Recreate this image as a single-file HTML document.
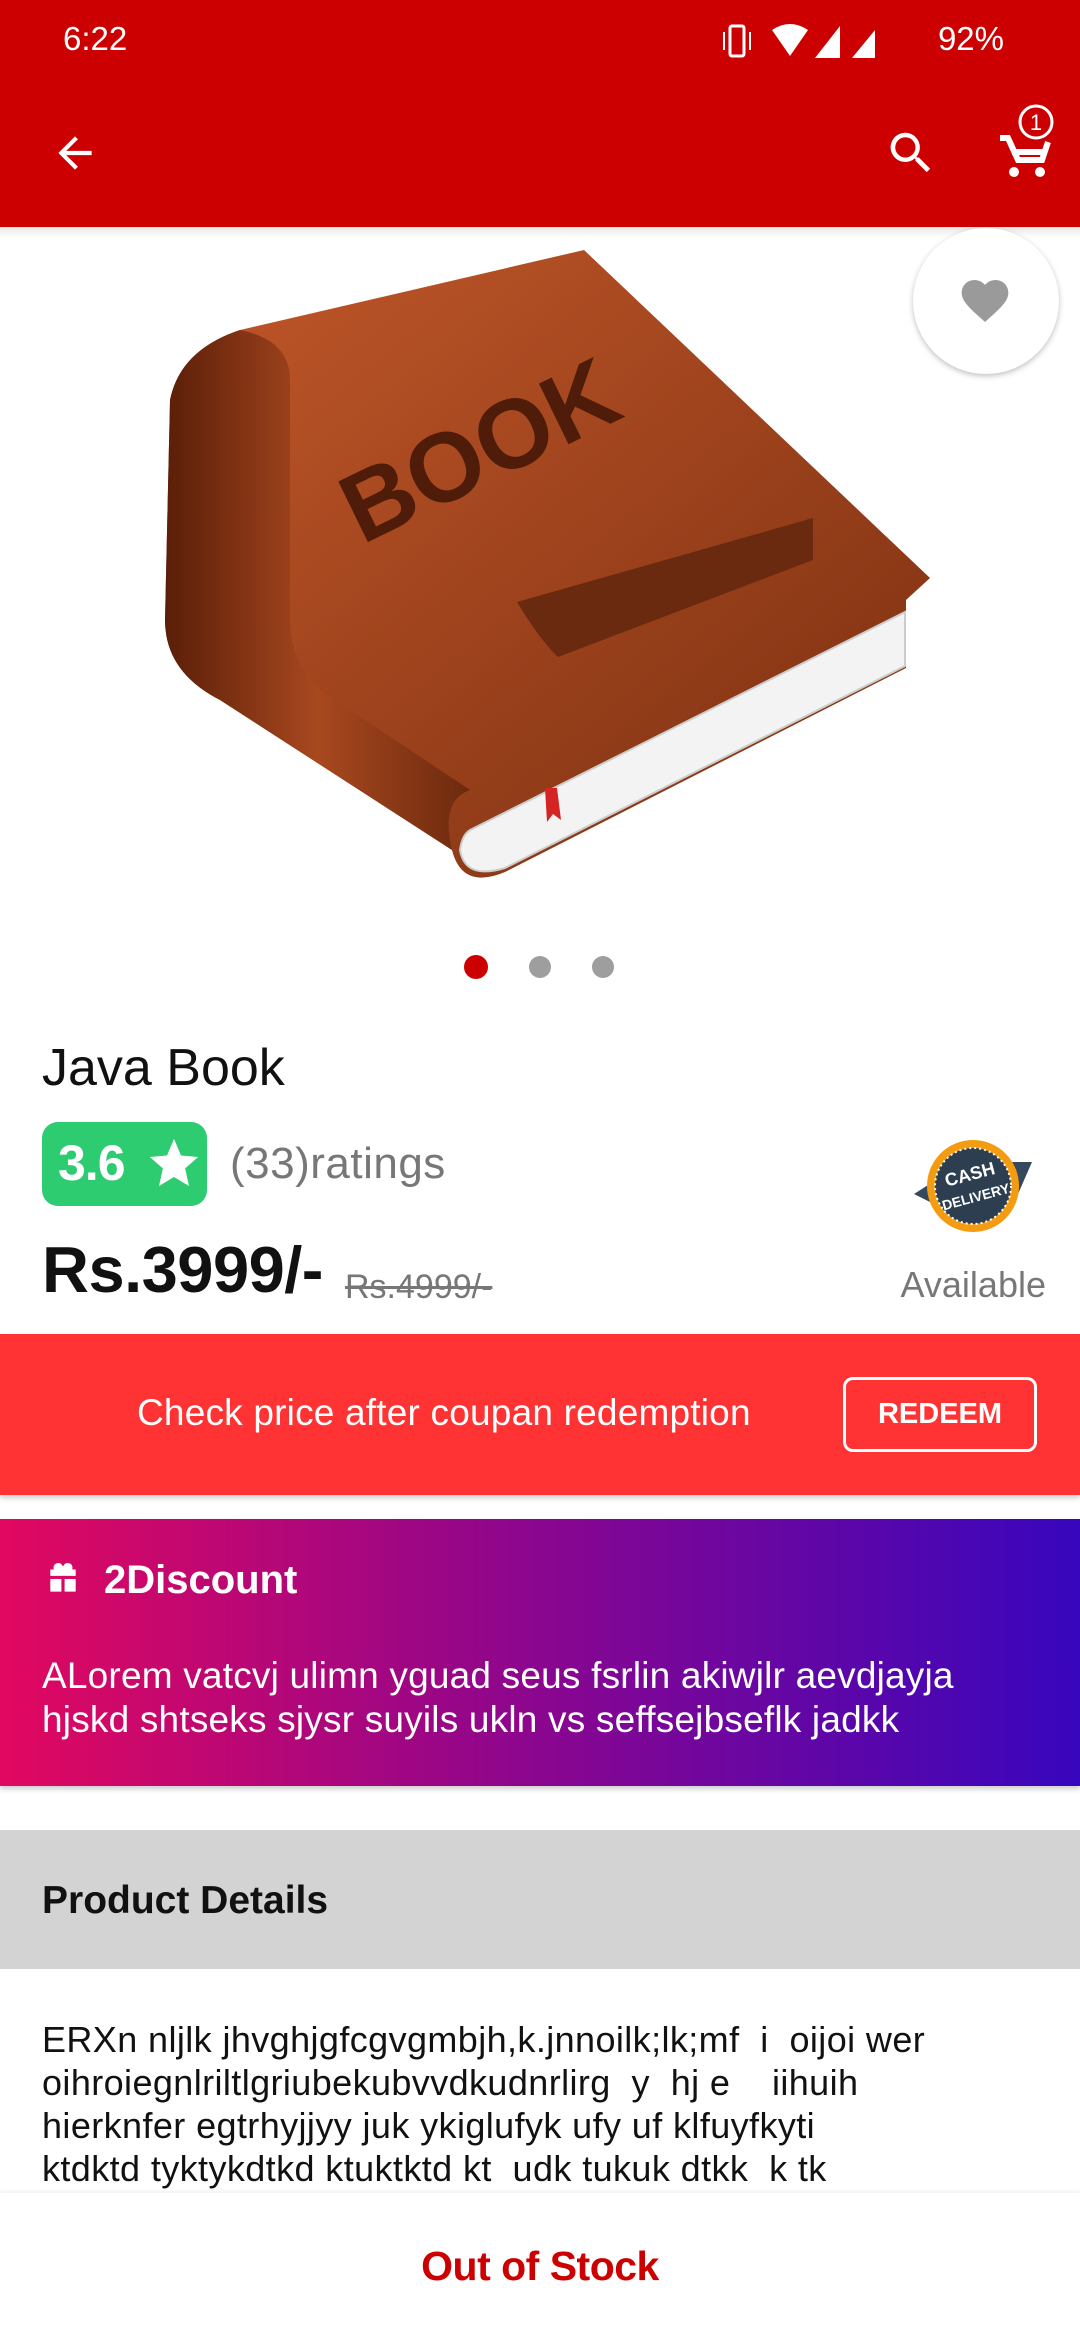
<!DOCTYPE html>
<html><head><meta charset="utf-8"><style>
*{margin:0;padding:0;box-sizing:border-box}
body{width:1080px;height:2340px;position:relative;overflow:hidden;background:#fff;font-family:"Liberation Sans",sans-serif}
.a{position:absolute}
</style></head><body>
<div class="a" style="left:0;top:0;width:1080px;height:227px;background:#cc0000"></div>
<div class="a" style="left:63px;top:20px;color:#fff;font-size:33px">6:22</div>
<div class="a" style="right:76px;top:20px;color:#fff;font-size:33px">92%</div>
<svg class="a" style="left:720px;top:20px" width="200" height="44" viewBox="0 0 200 44">
<rect x="10" y="6" width="14" height="30" rx="2" fill="none" stroke="#fff" stroke-width="3"/>
<path d="M4 12v18M30 12v18" stroke="#fff" stroke-width="2"/>
<path d="M52 10 Q70 -2 88 10 L70 36Z" fill="#fff"/>
<path d="M95 38 L120 6 L120 38Z" fill="#fff"/>
<path d="M132 38 L155 10 L155 38Z" fill="#fff"/>
</svg>
<svg class="a" style="left:50px;top:128px" width="50" height="50" viewBox="0 0 24 24"><path d="M20 11H7.8l5.6-5.6L12 4l-8 8 8 8 1.4-1.4L7.8 13H20z" fill="#fff"/></svg>
<svg class="a" style="left:884px;top:126px" width="54" height="54" viewBox="0 0 24 24"><path d="M15.5 14h-.8l-.3-.3A6.5 6.5 0 1 0 9.5 16a6.5 6.5 0 0 0 4.2-1.6l.3.3v.8l5 5 1.5-1.5-5-5zm-6 0a4.5 4.5 0 1 1 0-9 4.5 4.5 0 0 1 0 9z" fill="#fff"/></svg>
<svg class="a" style="left:996px;top:104px" width="60" height="80" viewBox="0 0 30 40">
<path d="M2 17h4l5 11h12l3-9" fill="none" stroke="#fff" stroke-width="3"/>
<path d="M8 24h16" stroke="#fff" stroke-width="3"/>
<circle cx="9" cy="34" r="2.5" fill="#fff"/><circle cx="22" cy="34" r="2.5" fill="#fff"/>
<circle cx="20" cy="9" r="8" fill="#cc0000" stroke="#fff" stroke-width="1.5"/>
<text x="20" y="13" font-size="11" fill="#fff" text-anchor="middle" font-family="Liberation Sans">1</text>
</svg>
<div class="a" style="left:0;top:227px;width:1080px;height:10px;background:linear-gradient(#e6e6e6,#fff)"></div>

<svg class="a" style="left:0;top:230px" width="1080" height="680" viewBox="0 230 1080 680">
<defs>
<linearGradient id="cv" x1="0" y1="0" x2="1" y2="1"><stop offset="0" stop-color="#c2582a"/><stop offset="1" stop-color="#7a2e10"/></linearGradient>
<linearGradient id="sp" x1="0" y1="0" x2="1" y2="0"><stop offset="0" stop-color="#5a1e08"/><stop offset=".5" stop-color="#a8481f"/><stop offset="1" stop-color="#6d2a0e"/></linearGradient>
</defs>
<path d="M584,250 L930,578 L906,600 L906,668 L505,872 Q462,890 452,850 L220,700 Q165,672 165,620 L170,400 Q180,350 240,330 Z" fill="url(#cv)"/>
<path d="M240,330 Q180,350 170,400 L165,620 Q165,672 220,700 L452,850 Q440,800 470,790 L320,690 Q290,660 290,620 L290,380 Q290,340 240,330Z" fill="url(#sp)"/>
<path d="M470,830 L905,612 L905,666 L505,868 Q465,880 460,850 Q462,835 470,830Z" fill="#f3f3f3" stroke="#ccc" stroke-width="2"/>
<path d="M545,788 l12,0 l4,32 l-8,-6 l-6,8z" fill="#d42424"/>
<path d="M517,602 L813,518 L813,560 L558,657 Q540,640 517,602Z" fill="#6a2a10"/>
<text x="362" y="545" font-size="98" font-weight="bold" fill="#4e1c08" transform="rotate(-26 362 545)" font-family="Liberation Sans">BOOK</text>
</svg>
<div class="a" style="left:913px;top:228px;width:146px;height:146px;border-radius:50%;background:#fff;box-shadow:0 2px 6px rgba(0,0,0,.25)"></div>
<svg class="a" style="left:957px;top:273px" width="56" height="56" viewBox="0 0 24 24"><path d="M12 21l-1.4-1.3C5.4 15 2 12 2 8.5 2 5.4 4.4 3 7.5 3c1.7 0 3.4.8 4.5 2.1C13.1 3.8 14.8 3 16.5 3 19.6 3 22 5.4 22 8.5c0 3.5-3.4 6.5-8.6 11.2z" fill="#9a9a9a"/></svg>

<div class="a" style="left:464px;top:955px;width:24px;height:24px;border-radius:50%;background:#cc0000"></div>
<div class="a" style="left:529px;top:956px;width:22px;height:22px;border-radius:50%;background:#9e9e9e"></div>
<div class="a" style="left:592px;top:956px;width:22px;height:22px;border-radius:50%;background:#9e9e9e"></div>

<div class="a" style="left:42px;top:1038px;font-size:52px;color:#111">Java Book</div>
<div class="a" style="left:42px;top:1122px;width:165px;height:84px;border-radius:16px;background:#2ecc71"></div>
<div class="a" style="left:58px;top:1134px;font-size:50px;color:#fff;font-weight:bold;letter-spacing:-1px">3.6</div>
<svg class="a" style="left:145px;top:1134px" width="58" height="58" viewBox="0 0 24 24"><path d="M12 2l2.9 6.9 7.1.6-5.4 4.7 1.6 7.3L12 17.8 5.8 21.5l1.6-7.3L2 9.5l7.1-.6z" fill="#fff"/></svg>
<div class="a" style="left:230px;top:1139px;font-size:44px;color:#777;letter-spacing:0.5px">(33)ratings</div>
<svg class="a" style="left:906px;top:1132px" width="134" height="108" viewBox="0 0 134 108">
<path d="M8 62 L30 48 L40 78 Z" fill="#34495e"/><path d="M126 30 L104 30 L112 62 Z" fill="#34495e"/>
<circle cx="67" cy="54" r="46" fill="#f39c12"/><circle cx="67" cy="54" r="38" fill="#2c3e50" stroke="#fff" stroke-width="2" stroke-dasharray="2 3"/>
<text x="67" y="48" font-size="18" font-weight="bold" fill="#fff" text-anchor="middle" transform="rotate(-15 67 54)" font-family="Liberation Sans">CASH</text>
<text x="67" y="70" font-size="14" font-weight="bold" fill="#fff" text-anchor="middle" transform="rotate(-15 67 54)" font-family="Liberation Sans">DELIVERY</text>
</svg>
<div class="a" style="left:42px;top:1232px;font-size:65px;color:#111;font-weight:bold;letter-spacing:-0.5px">Rs.3999/-</div>
<div class="a" style="left:345px;top:1268px;font-size:34px;color:#777;text-decoration:line-through">Rs.4999/-</div>
<div class="a" style="right:34px;top:1264px;font-size:36px;color:#777">Available</div>

<div class="a" style="left:0;top:1334px;width:1080px;height:161px;background:#ff3333;box-shadow:0 3px 5px rgba(0,0,0,.2)"></div>
<div class="a" style="left:137px;top:1392px;font-size:37px;color:#fff;letter-spacing:0.2px">Check price after coupan redemption</div>
<div class="a" style="left:843px;top:1377px;width:194px;height:75px;border:3px solid #fff;border-radius:10px;color:#fff;font-size:29px;font-weight:bold;text-align:center;line-height:69px">REDEEM</div>

<div class="a" style="left:0;top:1519px;width:1080px;height:267px;background:linear-gradient(90deg,#e1085f,#8a068f 50%,#3806bd);box-shadow:0 3px 5px rgba(0,0,0,.2)"></div>
<svg class="a" style="left:44px;top:1560px" width="38" height="38" viewBox="0 0 24 24"><path d="M20 6h-2.2c.1-.3.2-.6.2-1a3 3 0 0 0-5.5-1.7L12 4l-.5-.7A3 3 0 0 0 6 5c0 .4.1.7.2 1H4v4h16zM4 12v8h7v-8zm9 0v8h7v-8z" fill="#fff"/></svg>
<div class="a" style="left:104px;top:1558px;font-size:40px;color:#fff;font-weight:bold">2Discount</div>
<div class="a" style="left:42px;top:1654px;font-size:37px;color:#fff;line-height:44px;letter-spacing:0.2px">ALorem vatcvj ulimn yguad seus fsrlin akiwjlr aevdjayja<br>hjskd shtseks sjysr suyils ukln vs seffsejbseflk jadkk</div>

<div class="a" style="left:0;top:1830px;width:1080px;height:139px;background:#d3d3d3"></div>
<div class="a" style="left:42px;top:1879px;font-size:39px;color:#111;font-weight:bold">Product Details</div>
<div class="a" style="left:42px;top:2018px;font-size:36px;color:#111;line-height:43px;white-space:pre;letter-spacing:0.4px">ERXn nljlk jhvghjgfcgvgmbjh,k.jnnoilk;lk;mf  i  oijoi wer
oihroiegnlriltlgriubekubvvdkudnrlirg  y  hj e    iihuih
hierknfer egtrhyjjyy juk ykiglufyk ufy uf klfuyfkyti
ktdktd tyktykdtkd ktuktktd kt  udk tukuk dtkk  k tk</div>

<div class="a" style="left:0;top:2193px;width:1080px;height:147px;background:#fff;box-shadow:0 -2px 4px rgba(0,0,0,.06)"></div>
<div class="a" style="left:0;top:2243px;width:1080px;text-align:center;font-size:41px;color:#cc0000;font-weight:bold;letter-spacing:-0.5px">Out of Stock</div>
</body></html>
